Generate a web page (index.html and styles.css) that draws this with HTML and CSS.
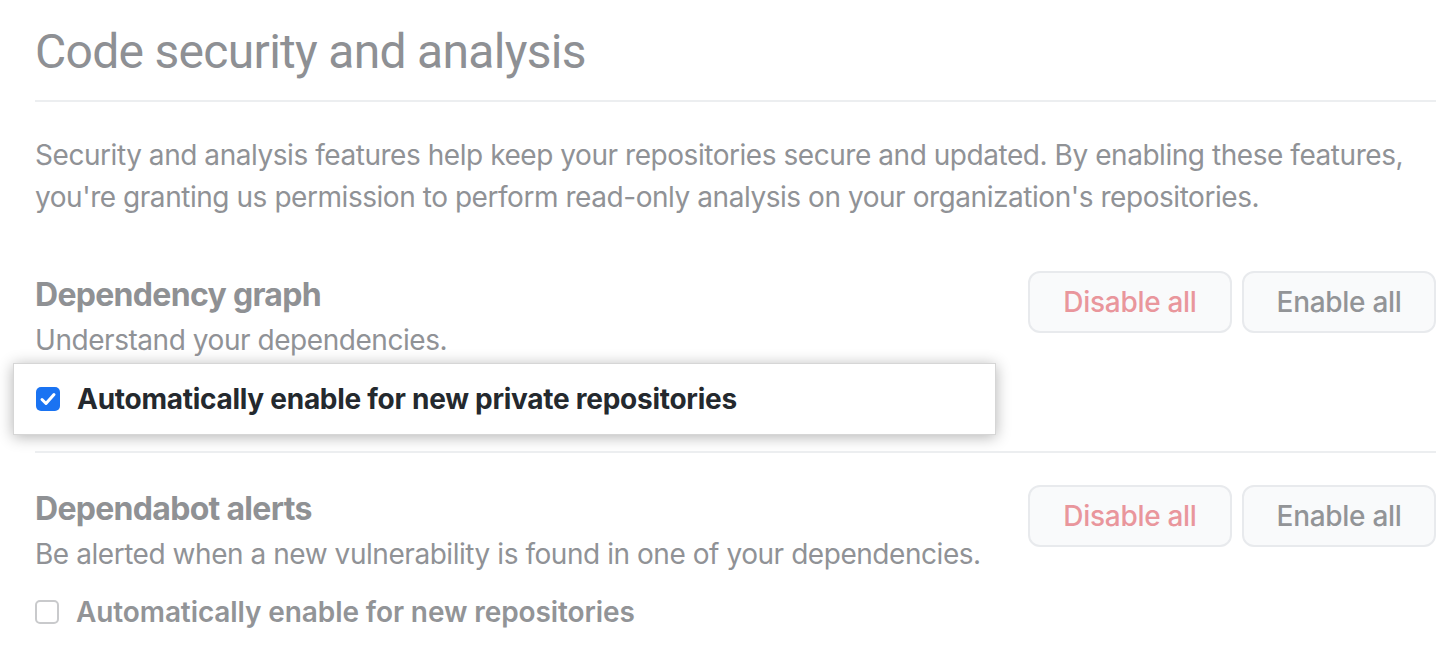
FILE: index.html
```html
<!DOCTYPE html>
<html>
<head>
<meta charset="utf-8">
<link rel="stylesheet" href="styles.css">
</head>
<body>
<div class="page">
  <h1 class="title">Code security and analysis</h1>
  <p class="intro">Security and analysis features help keep your repositories secure and updated. By enabling these features, you're granting us permission to perform read-only analysis on your organization's repositories.</p>

  <section class="feature first">
    <div class="feature-main">
      <h2 class="feature-title">Dependency graph</h2>
      <p class="feature-desc">Understand your dependencies.</p>
    </div>
    <div class="actions">
      <button class="btn btn-danger">Disable all</button>
      <button class="btn">Enable all</button>
    </div>
  </section>
  <div class="highlight">
    <span class="check checked"><svg viewBox="0 0 24 24" width="24" height="24"><path d="M6 12.5l4 4 8-9" fill="none" stroke="#fff" stroke-width="3" stroke-linecap="round" stroke-linejoin="round"/></svg></span>
    <span class="highlight-label">Automatically enable for new private repositories</span>
  </div>
  <div class="divider"></div>

  <section class="feature">
    <div class="feature-main">
      <h2 class="feature-title">Dependabot alerts</h2>
      <p class="feature-desc">Be alerted when a new vulnerability is found in one of your dependencies.</p>
      <div class="option">
        <span class="check"></span>
        <span class="option-label">Automatically enable for new repositories</span>
      </div>
    </div>
    <div class="actions">
      <button class="btn btn-danger">Disable all</button>
      <button class="btn">Enable all</button>
    </div>
  </section>
</div>
</body>
</html>
```

FILE: styles.css
```css
* { box-sizing: border-box; }
html, body { margin: 0; padding: 0; background: #fff; }
body {
  font-family: Inter, "Noto Sans", "Liberation Sans", sans-serif;
  color: #8f9195;
}
.page {
  padding: 0 20px 0 35px;
}
.title {
  margin: 0;
  padding: 22px 0 18px;
  font-family: Roboto, "Liberation Sans", sans-serif;
  font-size: 48px;
  line-height: 60px;
  font-weight: 400;
  letter-spacing: -0.7px;
  color: #8e9094;
  border-bottom: 2px solid #eceef0;
}
.intro {
  margin: 32px 0 0;
  font-size: 28px;
  line-height: 42px;
  letter-spacing: -0.45px;
  color: #909296;
}
.feature {
  display: flex;
  justify-content: space-between;
  align-items: flex-start;
}
.feature.first { margin-top: 53px; }
.feature-main { flex: 1; }
.feature-title {
  margin: 0;
  font-size: 32px;
  line-height: 48px;
  font-weight: 700;
  letter-spacing: -0.7px;
  color: #8f9194;
}
.feature-desc {
  margin: 0;
  font-size: 28px;
  line-height: 42px;
  letter-spacing: -0.45px;
  color: #909296;
}
.actions {
  display: flex;
  gap: 10px;
}
.btn {
  height: 62px;
  padding: 0 32.5px;
  font-family: inherit;
  font-size: 28px;
  font-weight: 500;
  letter-spacing: -0.3px;
  color: #929497;
  background: #f9fafb;
  border: 2px solid #e8eaed;
  border-radius: 12px;
}
.btn-danger { color: #e9969c; padding: 0 33.5px; }
.highlight {
  display: flex;
  align-items: center;
  gap: 17px;
  margin: 2px 0 0 -22px;
  width: 983px;
  height: 72px;
  padding-left: 22px;
  background: #fff;
  border: 1px solid #d6d6d6;
  box-shadow: 0 2px 14px rgba(0,0,0,0.3);
}
.check {
  display: inline-flex;
  width: 24px;
  height: 24px;
  border-radius: 5px;
  border: 2px solid #c9cacc;
  background: #fff;
  flex: none;
}
.check.checked {
  background: #1a73f2;
  border: none;
}
.highlight-label {
  font-size: 28px;
  font-weight: 700;
  letter-spacing: -0.27px;
  color: #24292e;
}
.divider {
  margin-top: 16px;
  height: 2px;
  background: #eceef0;
}
.divider + .feature { margin-top: 32px; }
.option {
  display: flex;
  align-items: center;
  gap: 17px;
  margin-top: 16px;
  height: 42px;
}
.option-label {
  font-size: 28px;
  font-weight: 600;
  letter-spacing: -0.1px;
  color: #929497;
}
```
